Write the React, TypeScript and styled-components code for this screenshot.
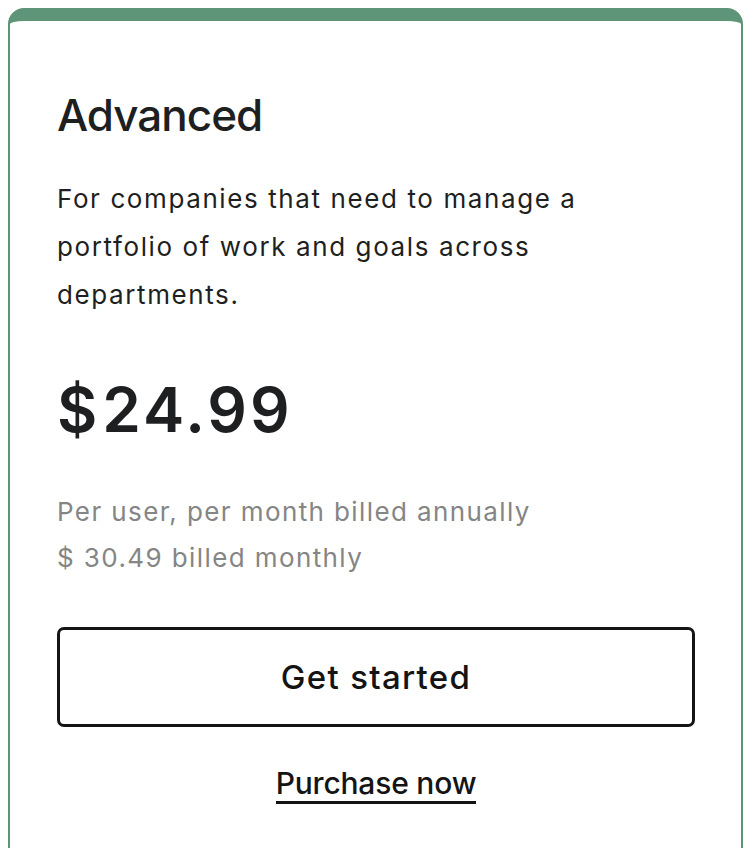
import React from "react";
import styled, { createGlobalStyle } from "styled-components";

const Global = createGlobalStyle`
  html, body { margin: 0; padding: 0; background: #ffffff; }
  body { font-family: "Inter", "Liberation Sans", sans-serif; color: #1e1f21; }
`;

const Page = styled.div`
  padding: 8px 13px 0 8px;
`;

const Card = styled.section`
  border: 2px solid #5e9478;
  border-top-width: 13px;
  border-radius: 16px 16px 0 0;
  padding: 68px 46px 70px 47px;
  display: flex;
  flex-direction: column;
  align-items: stretch;
`;

const Title = styled.h2`
  margin: 0;
  font-size: 44px;
  line-height: 52px;
  font-weight: 500;
  letter-spacing: -1px;
  color: #1e1f21;
`;

const Description = styled.p`
  margin: 34px 0 0;
  font-size: 26px;
  line-height: 48px;
  font-weight: 400;
  letter-spacing: 1.6px;
  color: #1e1f21;
  max-width: 600px;
`;

const Price = styled.div`
  margin-top: 60px;
  font-size: 62px;
  line-height: 62px;
  font-weight: 600;
  letter-spacing: 3px;
  color: #1e1f21;
`;

const Currency = styled.span`
  margin-right: 2px;
`;

const Billing = styled.p`
  margin: 48px 0 0;
  font-size: 26px;
  line-height: 46px;
  font-weight: 400;
  letter-spacing: 1.4px;
  color: #858585;
`;

const PrimaryButton = styled.button`
  margin-top: 46px;
  height: 100px;
  box-sizing: border-box;
  border: 3px solid #141414;
  border-radius: 7px;
  background: #ffffff;
  font-family: inherit;
  font-size: 33px;
  font-weight: 500;
  letter-spacing: 1.3px;
  color: #141414;
  cursor: pointer;
`;

const LinkRow = styled.div`
  margin-top: 38px;
  display: flex;
  justify-content: center;
`;

const TextLink = styled.a`
  display: inline-block;
  font-size: 30px;
  line-height: 36px;
  font-weight: 500;
  letter-spacing: -0.2px;
  color: #141414;
  text-decoration: none;
  border-bottom: 3px solid #141414;
  cursor: pointer;
`;

export default function App() {
  return (
    <Page>
      <Global />
      <Card>
        <Title>Advanced</Title>
        <Description>
          For companies that need to manage a portfolio of work and goals across departments.
        </Description>
        <Price>
          <Currency>$</Currency>24.99
        </Price>
        <Billing>
          Per user, per month billed annually
          <br />$ 30.49 billed monthly
        </Billing>
        <PrimaryButton>Get started</PrimaryButton>
        <LinkRow>
          <TextLink>Purchase now</TextLink>
        </LinkRow>
      </Card>
    </Page>
  );
}
